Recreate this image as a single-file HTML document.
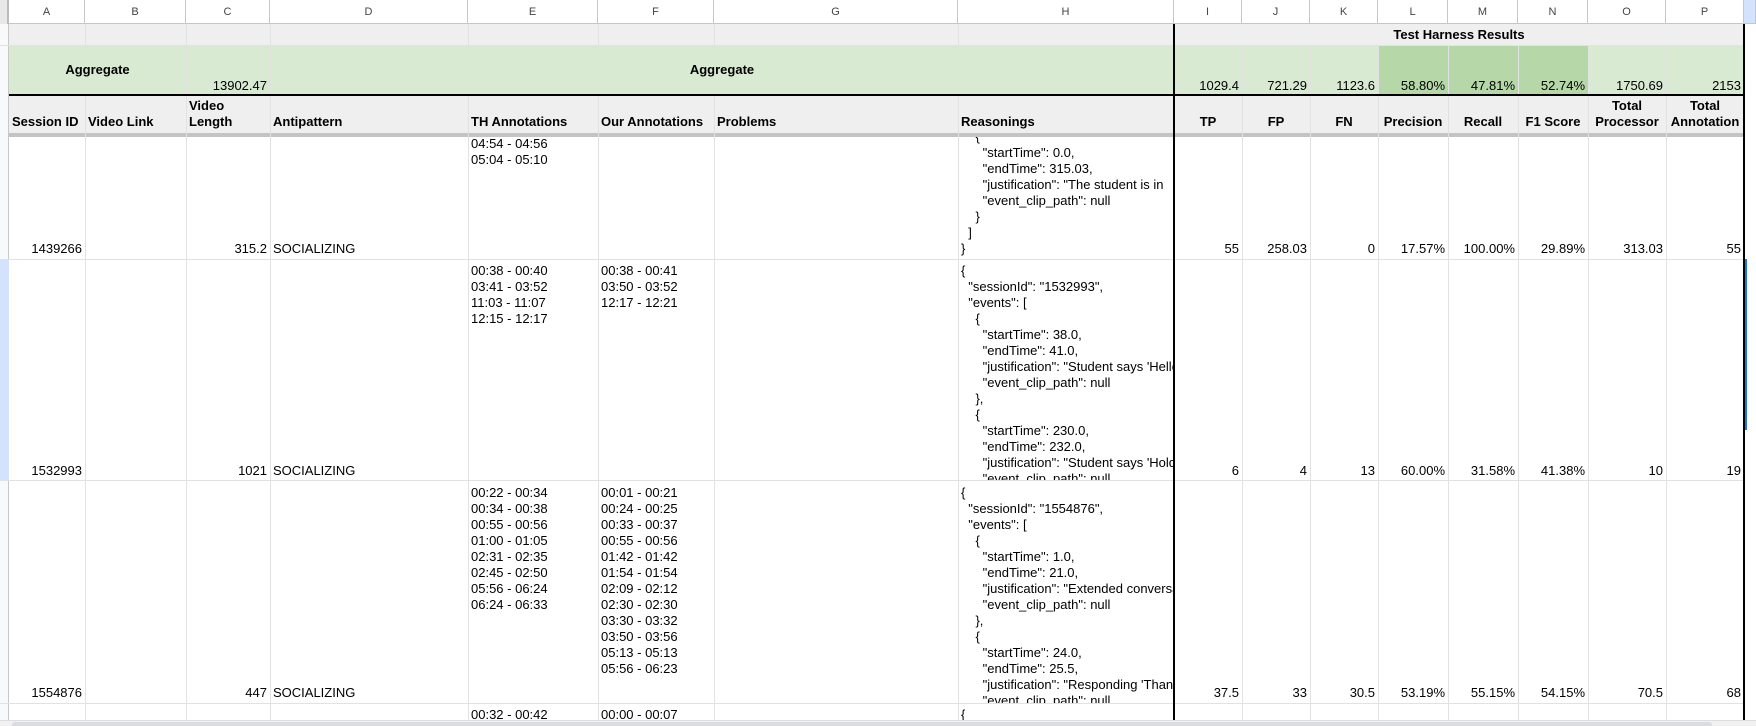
<!DOCTYPE html>
<html><head><meta charset="utf-8"><style>
*{margin:0;padding:0;box-sizing:border-box}
body{width:1756px;height:726px;overflow:hidden;background:#fff;font-family:"Liberation Sans",Arial,sans-serif;font-size:13px;color:#000;position:relative}
.a{position:absolute}
.t{position:absolute;white-space:pre;line-height:16px;overflow:hidden;font-size:13px}
.r{text-align:right;padding-right:3px}
.b{font-weight:bold}
.ch{position:absolute;top:0;height:24px;line-height:24px;text-align:center;font-size:11px;color:#444;border-right:1px solid #c7c7c7;border-bottom:1px solid #c7c7c7;background:#fff}
.vl{position:absolute;width:1px;background:#e2e2e2}
.hl{position:absolute;height:1px;background:#e2e2e2;left:0;width:1745px}
</style></head><body>

<!-- row backgrounds -->
<div class="a" style="left:0;top:24px;width:1745px;height:21px;background:#efefef"></div>
<div class="a" style="left:9px;top:45px;width:1736px;height:50px;background:#d9ead3"></div>
<div class="a" style="left:1378px;top:45px;width:210px;height:50px;background:#b6d7a8"></div>
<div class="a" style="left:0;top:95px;width:1745px;height:38px;background:#efefef"></div>
<div class="a" style="left:0;top:133px;width:1745px;height:4px;background:#c4c4c4"></div>

<!-- gutter -->
<div class="a" style="left:0;top:0;width:9px;height:726px;background:#f8f9fa;border-right:1px solid #c7c7c7"></div>
<div class="a" style="left:0;top:0;width:9px;height:24px;background:#e8e8e8;border-right:2px solid #bbb"></div>
<div class="a" style="left:0;top:259px;width:9px;height:222px;background:#d3e3fd"></div>

<!-- vertical grid lines -->
<div class="vl" style="left:85px;top:24px;height:21px"></div>
<div class="vl" style="left:186px;top:24px;height:696px"></div>
<div class="vl" style="left:270px;top:24px;height:696px"></div>
<div class="vl" style="left:468px;top:24px;height:21px"></div><div class="vl" style="left:468px;top:95px;height:625px"></div>
<div class="vl" style="left:598px;top:24px;height:21px"></div><div class="vl" style="left:598px;top:95px;height:625px"></div>
<div class="vl" style="left:714px;top:24px;height:21px"></div><div class="vl" style="left:714px;top:95px;height:625px"></div>
<div class="vl" style="left:958px;top:24px;height:21px"></div><div class="vl" style="left:958px;top:95px;height:625px"></div>
<div class="vl" style="left:85px;top:95px;height:625px"></div>
<div class="vl" style="left:1242px;top:45px;height:675px"></div>
<div class="vl" style="left:1310px;top:45px;height:675px"></div>
<div class="vl" style="left:1378px;top:45px;height:675px"></div>
<div class="vl" style="left:1448px;top:45px;height:675px"></div>
<div class="vl" style="left:1518px;top:45px;height:675px"></div>
<div class="vl" style="left:1588px;top:45px;height:675px"></div>
<div class="vl" style="left:1666px;top:45px;height:675px"></div>

<!-- horizontal lines -->
<div class="hl" style="top:45px"></div>
<div class="hl" style="top:259px"></div>
<div class="hl" style="top:480px"></div>
<div class="hl" style="top:703px"></div>
<div class="a" style="left:9px;top:94px;width:1736px;height:2px;background:#000"></div>
<div class="a" style="left:1173px;top:24px;width:2px;height:696px;background:#000"></div>
<div class="a" style="left:1743px;top:24px;width:2px;height:696px;background:#000"></div>
<div class="a" style="left:1745px;top:259px;width:2px;height:171px;background:#1a73e8"></div>

<!-- column headers -->
<div class="ch" style="left:9px;width:76px">A</div>
<div class="ch" style="left:85px;width:101px">B</div>
<div class="ch" style="left:186px;width:84px">C</div>
<div class="ch" style="left:270px;width:198px">D</div>
<div class="ch" style="left:468px;width:130px">E</div>
<div class="ch" style="left:598px;width:116px">F</div>
<div class="ch" style="left:714px;width:244px">G</div>
<div class="ch" style="left:958px;width:216px">H</div>
<div class="ch" style="left:1174px;width:68px">I</div>
<div class="ch" style="left:1242px;width:68px">J</div>
<div class="ch" style="left:1310px;width:68px">K</div>
<div class="ch" style="left:1378px;width:70px">L</div>
<div class="ch" style="left:1448px;width:70px">M</div>
<div class="ch" style="left:1518px;width:70px">N</div>
<div class="ch" style="left:1588px;width:78px">O</div>
<div class="ch" style="left:1666px;width:78px">P</div>
<div class="ch" style="left:1744px;width:12px;background:#d3e3fd"></div>

<!-- row 2 -->
<div class="t b" style="left:1174px;top:27px;width:570px;text-align:center">Test Harness Results</div>
<!-- row 3 -->
<div class="t b" style="left:9px;top:62px;width:177px;text-align:center">Aggregate</div>
<div class="t r" style="left:186px;top:78px;width:84px">13902.47</div>
<div class="t b" style="left:270px;top:62px;width:904px;text-align:center">Aggregate</div>
<div class="t r" style="left:1174px;top:78px;width:68px">1029.4</div>
<div class="t r" style="left:1242px;top:78px;width:68px">721.29</div>
<div class="t r" style="left:1310px;top:78px;width:68px">1123.6</div>
<div class="t r" style="left:1378px;top:78px;width:70px">58.80%</div>
<div class="t r" style="left:1448px;top:78px;width:70px">47.81%</div>
<div class="t r" style="left:1518px;top:78px;width:70px">52.74%</div>
<div class="t r" style="left:1588px;top:78px;width:78px">1750.69</div>
<div class="t r" style="left:1666px;top:78px;width:78px">2153</div>

<!-- row 4 headers -->
<div class="t b" style="left:12px;top:114px">Session ID</div>
<div class="t b" style="left:88px;top:114px">Video Link</div>
<div class="t b" style="left:189px;top:98px">Video
Length</div>
<div class="t b" style="left:273px;top:114px">Antipattern</div>
<div class="t b" style="left:471px;top:114px">TH Annotations</div>
<div class="t b" style="left:601px;top:114px">Our Annotations</div>
<div class="t b" style="left:717px;top:114px">Problems</div>
<div class="t b" style="left:961px;top:114px">Reasonings</div>
<div class="t b" style="left:1174px;top:114px;width:68px;text-align:center">TP</div>
<div class="t b" style="left:1242px;top:114px;width:68px;text-align:center">FP</div>
<div class="t b" style="left:1310px;top:114px;width:68px;text-align:center">FN</div>
<div class="t b" style="left:1378px;top:114px;width:70px;text-align:center">Precision</div>
<div class="t b" style="left:1448px;top:114px;width:70px;text-align:center">Recall</div>
<div class="t b" style="left:1518px;top:114px;width:70px;text-align:center">F1 Score</div>
<div class="t b" style="left:1588px;top:98px;width:78px;text-align:center">Total
Processor</div>
<div class="t b" style="left:1666px;top:98px;width:78px;text-align:center">Total
Annotation</div>

<!-- row 5 -->
<div class="t" style="left:471px;top:136px">04:54 - 04:56
05:04 - 05:10</div>
<div class="t" style="left:961px;top:137px;width:212px;height:122px;display:flex;flex-direction:column;justify-content:flex-end;padding-bottom:2px">    {
      "startTime": 0.0,
      "endTime": 315.03,
      "justification": "The student is in
      "event_clip_path": null
    }
  ]
}</div>
<div class="t r" style="left:9px;top:241px;width:76px">1439266</div>
<div class="t r" style="left:186px;top:241px;width:84px">315.2</div>
<div class="t" style="left:273px;top:241px">SOCIALIZING</div>
<div class="t r" style="left:1174px;top:241px;width:68px">55</div>
<div class="t r" style="left:1242px;top:241px;width:68px">258.03</div>
<div class="t r" style="left:1310px;top:241px;width:68px">0</div>
<div class="t r" style="left:1378px;top:241px;width:70px">17.57%</div>
<div class="t r" style="left:1448px;top:241px;width:70px">100.00%</div>
<div class="t r" style="left:1518px;top:241px;width:70px">29.89%</div>
<div class="t r" style="left:1588px;top:241px;width:78px">313.03</div>
<div class="t r" style="left:1666px;top:241px;width:78px">55</div>

<!-- row 6 -->
<div class="t" style="left:471px;top:263px">00:38 - 00:40
03:41 - 03:52
11:03 - 11:07
12:15 - 12:17</div>
<div class="t" style="left:601px;top:263px">00:38 - 00:41
03:50 - 03:52
12:17 - 12:21</div>
<div class="t" style="left:961px;top:263px;width:212px;height:217px">{
  "sessionId": "1532993",
  "events": [
    {
      "startTime": 38.0,
      "endTime": 41.0,
      "justification": "Student says 'Hello
      "event_clip_path": null
    },
    {
      "startTime": 230.0,
      "endTime": 232.0,
      "justification": "Student says 'Hold
      "event_clip_path": null</div>
<div class="t r" style="left:9px;top:463px;width:76px">1532993</div>
<div class="t r" style="left:186px;top:463px;width:84px">1021</div>
<div class="t" style="left:273px;top:463px">SOCIALIZING</div>
<div class="t r" style="left:1174px;top:463px;width:68px">6</div>
<div class="t r" style="left:1242px;top:463px;width:68px">4</div>
<div class="t r" style="left:1310px;top:463px;width:68px">13</div>
<div class="t r" style="left:1378px;top:463px;width:70px">60.00%</div>
<div class="t r" style="left:1448px;top:463px;width:70px">31.58%</div>
<div class="t r" style="left:1518px;top:463px;width:70px">41.38%</div>
<div class="t r" style="left:1588px;top:463px;width:78px">10</div>
<div class="t r" style="left:1666px;top:463px;width:78px">19</div>

<!-- row 7 -->
<div class="t" style="left:471px;top:485px">00:22 - 00:34
00:34 - 00:38
00:55 - 00:56
01:00 - 01:05
02:31 - 02:35
02:45 - 02:50
05:56 - 06:24
06:24 - 06:33</div>
<div class="t" style="left:601px;top:485px">00:01 - 00:21
00:24 - 00:25
00:33 - 00:37
00:55 - 00:56
01:42 - 01:42
01:54 - 01:54
02:09 - 02:12
02:30 - 02:30
03:30 - 03:32
03:50 - 03:56
05:13 - 05:13
05:56 - 06:23</div>
<div class="t" style="left:961px;top:485px;width:212px;height:218px">{
  "sessionId": "1554876",
  "events": [
    {
      "startTime": 1.0,
      "endTime": 21.0,
      "justification": "Extended conversation
      "event_clip_path": null
    },
    {
      "startTime": 24.0,
      "endTime": 25.5,
      "justification": "Responding 'Thanks
      "event_clip_path": null</div>
<div class="t r" style="left:9px;top:685px;width:76px">1554876</div>
<div class="t r" style="left:186px;top:685px;width:84px">447</div>
<div class="t" style="left:273px;top:685px">SOCIALIZING</div>
<div class="t r" style="left:1174px;top:685px;width:68px">37.5</div>
<div class="t r" style="left:1242px;top:685px;width:68px">33</div>
<div class="t r" style="left:1310px;top:685px;width:68px">30.5</div>
<div class="t r" style="left:1378px;top:685px;width:70px">53.19%</div>
<div class="t r" style="left:1448px;top:685px;width:70px">55.15%</div>
<div class="t r" style="left:1518px;top:685px;width:70px">54.15%</div>
<div class="t r" style="left:1588px;top:685px;width:78px">70.5</div>
<div class="t r" style="left:1666px;top:685px;width:78px">68</div>

<!-- row 8 -->
<div class="t" style="left:471px;top:707px;height:13px">00:32 - 00:42</div>
<div class="t" style="left:601px;top:707px;height:13px">00:00 - 00:07</div>
<div class="t" style="left:961px;top:707px;height:13px">{</div>

<!-- scrollbar -->
<div class="a" style="left:0;top:720px;width:1756px;height:6px;background:#f1f1f1;border-top:1px solid #ddd"></div>
<div class="a" style="left:12px;top:722px;width:1700px;height:4px;background:#dadce0;border-radius:3px 3px 0 0"></div>
</body></html>
